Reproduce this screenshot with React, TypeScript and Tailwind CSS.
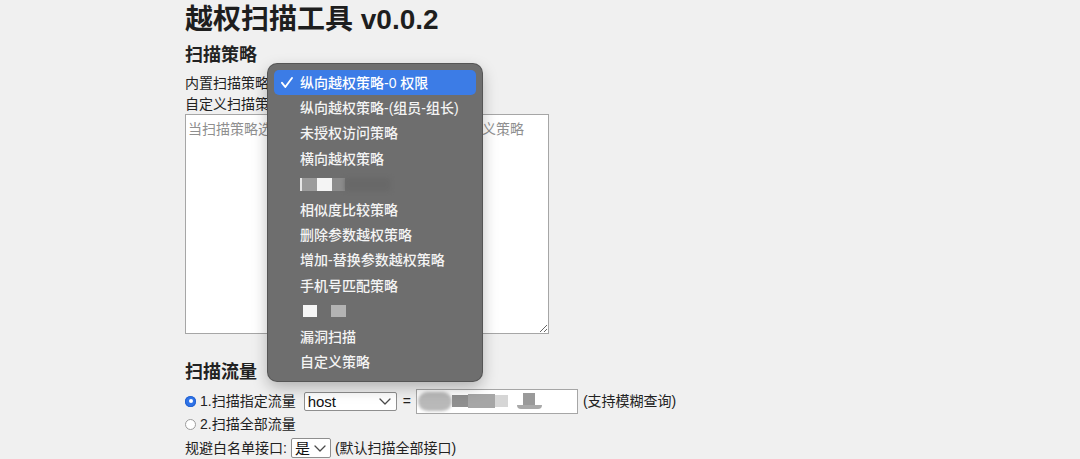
import React from 'react'

const STRATEGIES = [
  '纵向越权策略-0 权限',
  '纵向越权策略-(组员-组长)',
  '未授权访问策略',
  '横向越权策略',
  '__redact_a',
  '相似度比较策略',
  '删除参数越权策略',
  '增加-替换参数越权策略',
  '手机号匹配策略',
  '__redact_b',
  '漏洞扫描',
  '自定义策略',
]

function Chevron({ className }: { className: string }) {
  return (
    <svg className={className} viewBox="0 0 12 7" fill="none">
      <path d="M1 1l5 5 5-5" stroke="#4a4a4a" strokeWidth="1.3" strokeLinecap="round" strokeLinejoin="round" />
    </svg>
  )
}

function Radio({ checked }: { checked: boolean }) {
  return checked ? (
    <span className="flex h-[11px] w-[11px] shrink-0 items-center justify-center rounded-full bg-[#2f73e8] shadow-[inset_0_0_0_1px_#2563d0]">
      <span className="h-[4px] w-[4px] rounded-full bg-white" />
    </span>
  ) : (
    <span className="h-[11px] w-[11px] shrink-0 rounded-full border border-[#9c9c9c] bg-white" />
  )
}

/** Redacted (blurred-out) fragments in the original screenshot. */
function RedactA() {
  return (
    <div className="flex h-[13px] items-center">
      <span className="h-[13px] w-[2px] bg-[#e6e6e6]" />
      <span className="h-[13px] w-[15px] bg-[#9b9b9b]" />
      <span className="h-[13px] w-[15px] bg-[#f4f4f4]" />
      <span className="h-[13px] w-[13px] bg-[#8c8c8c]" />
      <span className="h-[13px] w-[45px] bg-[#686868] blur-[2px]" />
    </div>
  )
}

function RedactB() {
  return (
    <div className="flex h-[12px] items-center">
      <span className="ml-[3px] h-[12px] w-[14px] bg-[#f6f6f6]" />
      <span className="ml-[14px] h-[12px] w-[15px] bg-[#b3b3b3]" />
    </div>
  )
}

function StrategyMenu() {
  return (
    <div className="absolute left-[268px] top-[64px] w-[214px] rounded-[9px] bg-[#6e6e6e] py-[6px] shadow-[0_0_0_1px_#555,0_6px_16px_rgba(0,0,0,0.28)]">
      {STRATEGIES.map((s, i) => (
        <div key={s} className="h-[25.4px] px-[6px]">
          <div
            className={
              i === 0
                ? 'flex h-full items-center rounded-[5px] bg-[#3c7ce6] pl-[7px] text-white'
                : 'flex h-full items-center pl-[7px] text-[#f4f4f4]'
            }
          >
            <span className="flex w-[19px] shrink-0 items-center">
              {i === 0 && (
                <svg width="12" height="11" viewBox="0 0 12 11" fill="none">
                  <path d="M1 5.8L4.3 10L11 1" stroke="#fff" strokeWidth="1.9" strokeLinecap="round" strokeLinejoin="round" />
                </svg>
              )}
            </span>
            {s === '__redact_a' ? <RedactA /> : s === '__redact_b' ? <RedactB /> : (
              <span className="text-[14px] font-medium leading-none">{s}</span>
            )}
          </div>
        </div>
      ))}
    </div>
  )
}

export default function App() {
  return (
    <div className="relative h-[459px] w-[1080px] overflow-hidden bg-[#f0f0f0] font-['Liberation_Sans','Noto_Sans_CJK_SC',sans-serif] text-[14px] text-[#222]">
      <div className="pl-[185px]">
        <h1 className="flex h-[40px] items-center text-[28px] font-bold leading-none text-[#1e1e1e]">越权扫描工具 v0.0.2</h1>
        <h2 className="flex h-[30px] items-center text-[18px] font-bold leading-none">扫描策略</h2>

        <div className="mt-px flex h-[24px] items-center">内置扫描策略:</div>
        <div className="flex h-[19px] items-center">自定义扫描策略:</div>

        <textarea
          className="block h-[220px] w-[364px] resize border border-[#a6a6a6] bg-white px-[2px] pt-[4px] text-[14px] leading-5 outline-none placeholder:text-[#8f8f8f]"
          placeholder="当扫描策略选择自定义策略时，在此处填写自定义策略"
        />

        <h2 className="mt-[23px] flex h-[30px] items-center text-[18px] font-bold leading-none">扫描流量</h2>

        <div className="mt-px flex h-[26px] items-center">
          <Radio checked />
          <span className="ml-[4px]">1.扫描指定流量</span>
          <div className="ml-[8px] flex h-[19px] w-[93px] items-center justify-between rounded-[2px] border border-[#8e8e8e] bg-white pl-[3px] pr-[5px]">
            <span className="text-[15px] leading-none text-[#111]">host</span>
            <Chevron className="h-[7px] w-[12px]" />
          </div>
          <span className="ml-[6px]">=</span>
          <div className="ml-[5px] flex h-[25px] w-[162px] items-center border border-[#a6a6a6] bg-white">
            <span className="ml-px h-[19px] w-[34px] rounded-full bg-[#b9b9b9] blur-[1.5px]" />
            <span className="h-[12px] w-[16px] bg-[#8f8f8f] blur-[0.5px]" />
            <span className="h-[14px] w-[27px] bg-[#a6a6a6] blur-[0.5px]" />
            <span className="h-[12px] w-[13px] bg-[#d6d6d6]" />
            <div className="ml-[9px] flex flex-col items-center">
              <span className="h-[12px] w-[12px] bg-[#9a9a9a]" />
              <span className="h-[4px] w-[25px] rounded-b-full bg-[#a9a9a9]" />
            </div>
          </div>
          <span className="ml-[5px]">(支持模糊查询)</span>
        </div>

        <div className="flex h-[20px] items-center">
          <Radio checked={false} />
          <span className="ml-[4px]">2.扫描全部流量</span>
        </div>

        <div className="mt-[2px] flex h-[24px] items-center">
          <span>规避白名单接口:</span>
          <div className="ml-[4px] flex h-[20px] w-[40px] items-center justify-between rounded-[2px] border border-[#8e8e8e] bg-white pl-[3px] pr-[4px]">
            <span className="text-[15px] leading-none text-[#111]">是</span>
            <Chevron className="h-[7px] w-[12px]" />
          </div>
          <span className="ml-[4px]">(默认扫描全部接口)</span>
        </div>
      </div>

      <StrategyMenu />
    </div>
  )
}
